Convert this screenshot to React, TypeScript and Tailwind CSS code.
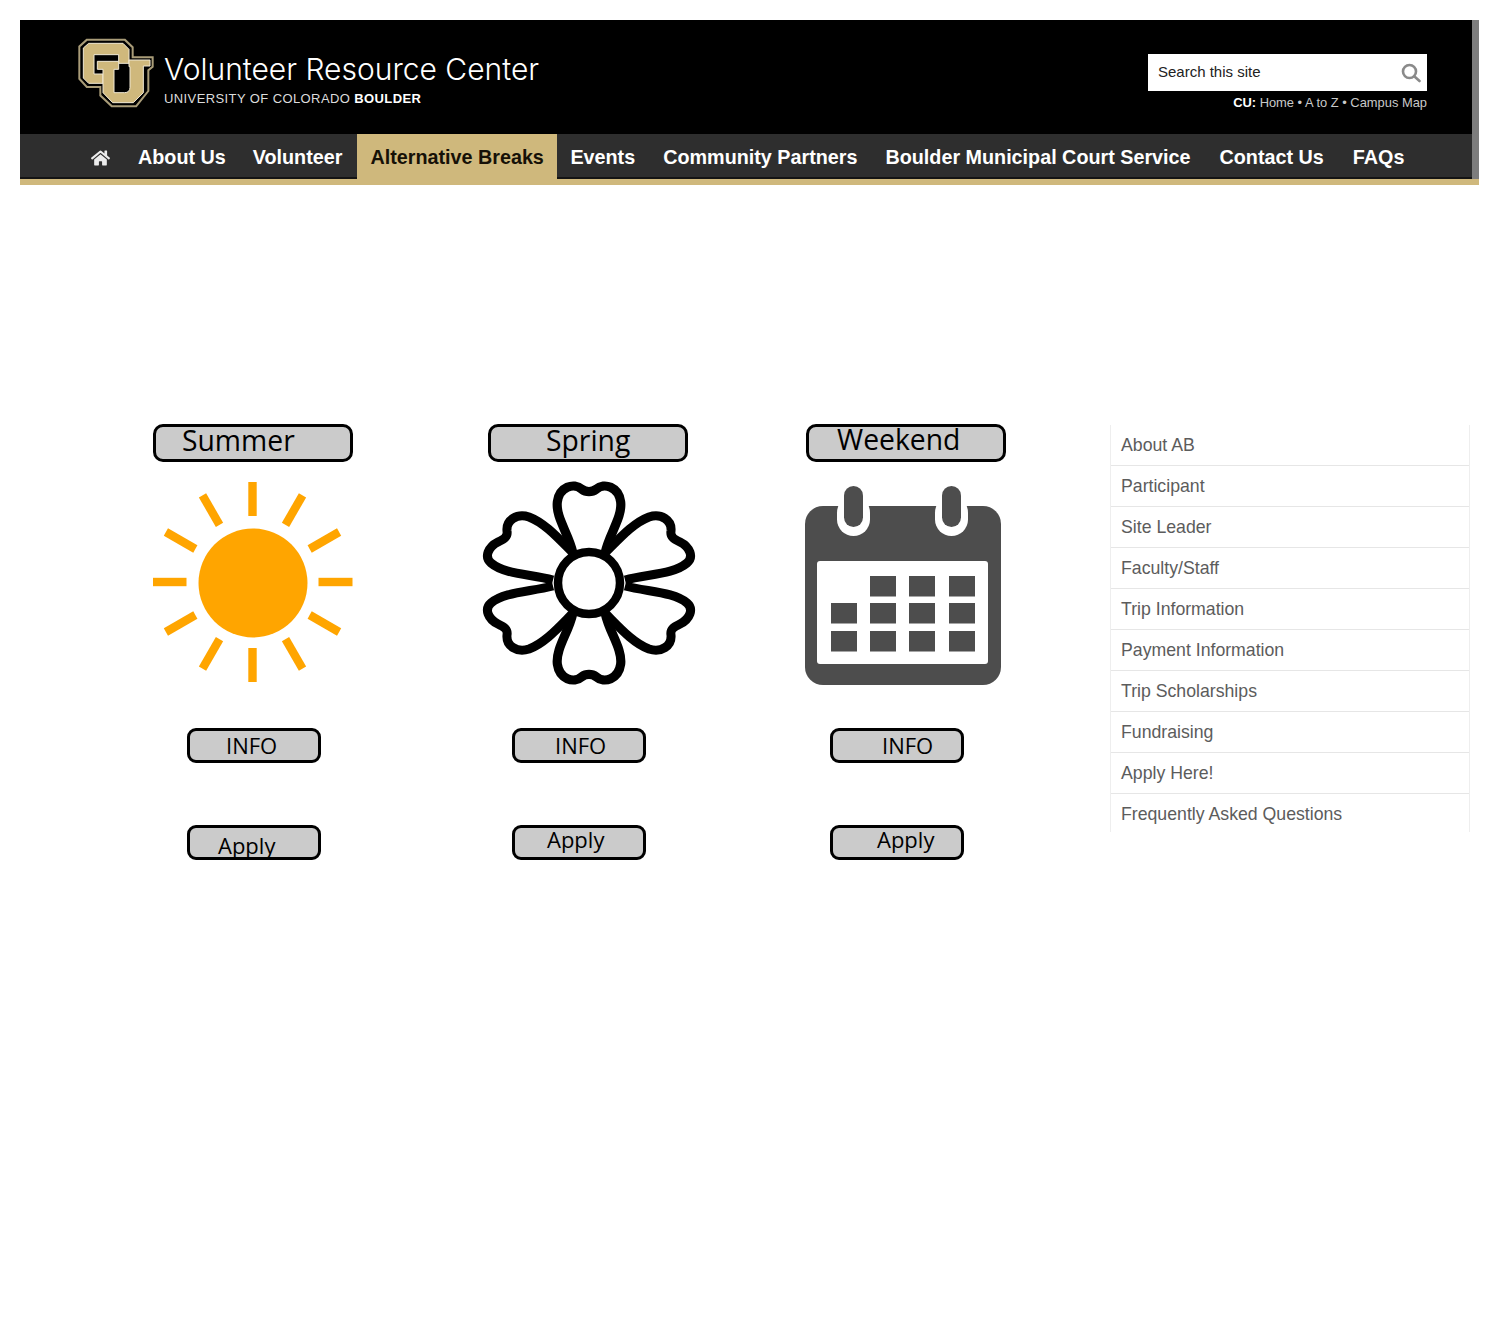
import { FaHome } from "react-icons/fa";

const navItems = [
  { label: "About Us", cls: "ml-[28px]" },
  { label: "Volunteer", cls: "ml-[27px]" },
];
const navItemsAfter = [
  { label: "Events", cls: "ml-[13px]" },
  { label: "Community Partners", cls: "ml-[28px]" },
  { label: "Boulder Municipal Court Service", cls: "ml-[28px]" },
  { label: "Contact Us", cls: "ml-[29px]" },
  { label: "FAQs", cls: "ml-[29px]" },
];
const sideLinks = [
  "About AB",
  "Participant",
  "Site Leader",
  "Faculty/Staff",
  "Trip Information",
  "Payment Information",
  "Trip Scholarships",
  "Fundraising",
  "Apply Here!",
  "Frequently Asked Questions",
];

function Logo() {
  return (
    <svg width="76" height="70" viewBox="50 22 228 210" className="shrink-0">
      <polygon
        points="75,24 192,24 217,48 217,77 277,77 277,110 264,120 264,182 226,230 150,230 114,196 114,172 75,172 51,146 51,46"
        fill="#a99c78"
      />
      <polygon
        points="78,30 189,30 211,51 211,83 271,83 271,107 258,117 258,180 223,224 153,224 120,193 120,166 78,166 57,143 57,49"
        fill="#000"
      />
      <path
        d="M82 38H185L203 56V98H172V72H98V130H125V158H82L66 142V52Z"
        fill="#cfb87c"
        stroke="#f0e8d4"
        strokeWidth="3"
      />
      <path
        d="M108 92H172V116H158V186H190C200 186 206 180 206 170V108H203V88H266V106H246V186L216 216H154L125 186V116H108Z"
        fill="#cfb87c"
        stroke="#f0e8d4"
        strokeWidth="3"
      />
    </svg>
  );
}

function Sun() {
  const angles = [0, 30, 60, 90, 120, 150, 180, 210, 240, 270, 300, 330];
  return (
    <svg width="200" height="204" viewBox="-100 -102 200 204" className="block">
      <circle cx="0" cy="0" r="54.5" fill="#ffa500" />
      <g transform="translate(-0.5 -1)">
        {angles.map((a) => (
          <rect key={a} x="-4.2" y="-100" width="8.4" height="34" fill="#ffa500" transform={`rotate(${a})`} />
        ))}
      </g>
    </svg>
  );
}

function Flower() {
  const petal =
    "M-16 -30C-20 -48 -33 -64 -31 -79C-29 -93 -15 -98 -7 -91C-3 -88 3 -88 7 -91C15 -98 29 -93 31 -79C33 -64 20 -48 16 -30";
  const sidePetal =
    "M16 -30C30 -44 44 -60 60 -66C72 -70 83 -63 82 -52C81 -46 85 -44 91 -41C101 -36 105 -26 98 -20C85 -9 60 -9 36 -3";
  return (
    <svg width="216" height="204" viewBox="-108 -102 216 204" className="block">
      {[0, 180].map((a) => (
        <path
          key={a}
          d={petal}
          fill="none"
          stroke="#000"
          strokeWidth="9"
          strokeLinejoin="round"
          transform={`scale(1.02 1.03) rotate(${a})`}
        />
      ))}
      {["scale(1 1)", "scale(-1 1)", "scale(1 -1)", "scale(-1 -1)"].map((t) => (
        <path key={t} d={sidePetal} fill="none" stroke="#000" strokeWidth="9" strokeLinejoin="round" transform={t} />
      ))}
      <circle cx="0" cy="0" r="31" fill="#fff" stroke="#000" strokeWidth="8.5" />
    </svg>
  );
}

function Calendar() {
  const xs = [13, 52, 91, 131];
  const ys = [75, 102, 130];
  return (
    <svg width="196" height="199" viewBox="0 0 196 199" className="block">
      <rect x="0" y="20" width="196" height="179" rx="18" fill="#4d4d4d" />
      <rect x="32" y="10" width="33" height="40" rx="16.5" fill="#fff" />
      <rect x="130" y="10" width="33" height="40" rx="16.5" fill="#fff" />
      <rect x="32" y="0" width="33" height="20" fill="#fff" />
      <rect x="130" y="0" width="33" height="20" fill="#fff" />
      <rect x="39" y="0" width="19" height="41" rx="9.5" fill="#4d4d4d" />
      <rect x="137" y="0" width="19" height="41" rx="9.5" fill="#4d4d4d" />
      <rect x="12" y="75" width="171" height="103" rx="3" fill="#fff" />
      {ys.map((y, r) =>
        xs.map((x, c) =>
          r === 0 && c === 0 ? null : (
            <rect key={`${x}-${y}`} x={x + 13} y={y + 15} width="26" height="20.5" fill="#4d4d4d" />
          ),
        ),
      )}
    </svg>
  );
}

function Pill({ label, boxCls, textCls }: { label: string; boxCls: string; textCls: string }) {
  return (
    <div className={`border-[3px] border-black bg-[#cbcbcb] text-black whitespace-nowrap ${boxCls}`}>
      <span className={`block ${textCls}`}>{label}</span>
    </div>
  );
}

const head = "w-[200px] h-[38px] rounded-[10px]";
const small = "w-[134px] h-[35px] rounded-[9px]";

export default function App() {
  return (
    <div className="min-h-[1329px] bg-white p-5 font-['Open_Sans',sans-serif]">
      <header className="relative h-[165px] w-[1459px] bg-black font-['Liberation_Sans',Arial,sans-serif]">
        <div className="flex h-[114px] items-start justify-between pr-[52px]">
          <div className="flex items-start pl-[58px] pt-[18px]">
            <Logo />
            <div className="ml-[10px] text-white">
              <div className="mt-[13px] font-['Inter',sans-serif] text-[30px] leading-[36px] font-light whitespace-nowrap">
                Volunteer Resource Center
              </div>
              <div className="mt-[4px] text-[13px] leading-[16px] tracking-[0.4px] whitespace-nowrap text-[#dcdcdc]">
                UNIVERSITY OF COLORADO <span className="font-bold text-white">BOULDER</span>
              </div>
            </div>
          </div>
          <div className="mt-[34px] flex w-[279px] flex-col items-end">
            <div className="flex h-[37px] w-full items-center justify-between bg-white pr-[6px] pl-[10px]">
              <span className="text-[15px] text-[#222]">Search this site</span>
              <svg width="20" height="20" viewBox="0 0 20 20" fill="none" stroke="#8a8a8a" strokeWidth="2.6">
                <circle cx="8.5" cy="8.5" r="6.5" />
                <path d="M13.5 13.5L18.5 18" strokeLinecap="round" />
              </svg>
            </div>
            <div className="mt-[5px] text-[12.9px] leading-[14px] whitespace-nowrap text-[#c9c9c9]">
              <span className="font-bold text-white">CU:</span> Home • A to Z • Campus Map
            </div>
          </div>
        </div>
        <nav className="flex h-[45px] items-center border-b-[2px] border-[#141414] bg-[#2e2e2e] pt-[5px] pl-[71px] text-[19.75px] font-bold text-white">
          <FaHome className="h-[18px] w-[19px] shrink-0 text-[#ececec]" />
          {navItems.map((n) => (
            <span key={n.label} className={`whitespace-nowrap ${n.cls}`}>
              {n.label}
            </span>
          ))}
          <span className="z-10 -mt-[5px] ml-[15px] flex h-[51px] w-[200px] shrink-0 self-start bg-[#cfb87c] pt-[9px] pl-[13px] whitespace-nowrap text-[#161107]">
            Alternative Breaks
          </span>
          {navItemsAfter.map((n) => (
            <span key={n.label} className={`whitespace-nowrap ${n.cls}`}>
              {n.label}
            </span>
          ))}
        </nav>
        <div className="h-[6px] bg-[#cfb87c]" />
        <div className="absolute top-0 right-0 h-[159px] w-[7px] bg-[#7d7d7d]" />
      </header>

      <main className="mt-[239px] flex items-start">
        <section className="ml-[133px] w-[200px]">
          <Pill label="Summer" boxCls={head} textCls="pl-[26px] -mt-[1px] text-[28.3px] leading-[29px]" />
          <div className="mt-[19px] h-[247px]">
            <Sun />
          </div>
          <div className="ml-[34px]">
            <Pill label="INFO" boxCls={small} textCls="pl-[36px] text-[22px] leading-[29px]" />
            <div className="mt-[62px]">
              <Pill
                label="Apply"
                boxCls={`${small} overflow-hidden`}
                textCls="pl-[28px] pt-[3px] text-[22px] leading-[29px]"
              />
            </div>
          </div>
        </section>

        <section className="ml-[135px] w-[200px]">
          <Pill label="Spring" boxCls={head} textCls="pl-[55px] -mt-[1px] text-[28.3px] leading-[29px]" />
          <div className="mt-[19px] -ml-[7px] h-[247px]">
            <Flower />
          </div>
          <div className="ml-[24px]">
            <Pill label="INFO" boxCls={small} textCls="pl-[40px] text-[22px] leading-[29px]" />
            <div className="mt-[62px]">
              <Pill label="Apply" boxCls={small} textCls="pl-[32px] -mt-[3px] text-[22px] leading-[29px]" />
            </div>
          </div>
        </section>

        <section className="ml-[118px] w-[200px]">
          <Pill label="Weekend" boxCls={head} textCls="pl-[28px] -mt-[1px] text-[28.3px] leading-[27px]" />
          <div className="mt-[24px] -ml-[1px] h-[242px]">
            <Calendar />
          </div>
          <div className="ml-[24px]">
            <Pill label="INFO" boxCls={small} textCls="pl-[49px] text-[22px] leading-[29px]" />
            <div className="mt-[62px]">
              <Pill label="Apply" boxCls={small} textCls="pl-[44px] -mt-[3px] text-[22px] leading-[29px]" />
            </div>
          </div>
        </section>

        <aside className="mt-[1px] ml-[104px] w-[360px] border-x border-[#eeeeee] font-['Liberation_Sans',Arial,sans-serif] text-[17.7px] leading-[20px] text-[#5c5c5c]">
          {sideLinks.map((s, i) => (
            <div
              key={s}
              className={`pt-[10px] pl-[10px] ${i < sideLinks.length - 1 ? "h-[41px] border-b border-[#e6e6e6]" : "h-[38px]"}`}
            >
              {s}
            </div>
          ))}
        </aside>
      </main>
    </div>
  );
}
